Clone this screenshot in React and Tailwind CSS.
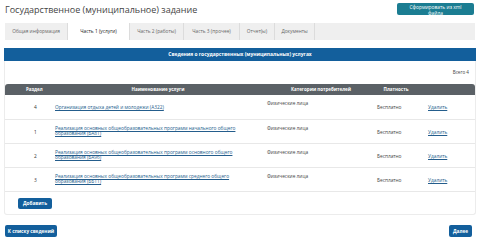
const rows = [
  { section: '4', name: ['Организация отдыха детей и молодежи (А322)'] },
  { section: '1', name: ['Реализация основных общеобразовательных программ начального общего', 'образования (БА81)'] },
  { section: '2', name: ['Реализация основных общеобразовательных программ основного общего', 'образования (БА96)'] },
  { section: '3', name: ['Реализация основных общеобразовательных программ среднего общего', 'образования (ББ11)'] },
]

const tabs = [
  { label: 'Общая информация', w: 'w-[63px]' },
  { label: 'Часть 1 (услуги)', w: 'w-[62px]', active: true },
  { label: 'Часть 2 (работы)', w: 'w-[54px]' },
  { label: 'Часть 3 (прочее)', w: 'w-[56px]' },
  { label: 'Отчет(ы)', w: 'w-[35px]' },
  { label: 'Документы', w: 'w-[40px]' },
]

export default function App() {
  return (
    <div className="w-[480px] h-[244px] overflow-hidden bg-white font-['Open_Sans',sans-serif] text-[#333] leading-none">
      <div className="flex items-start justify-between pl-[5px] pr-[6px] pt-[3px] h-[21px]">
        <h1 className="text-[9px] leading-[14px] text-[#444]">Государственное (муниципальное) задание</h1>
        <button className="w-[77px] h-[12px] overflow-hidden rounded-[2px] bg-[#1b7d92] text-white text-[4.9px] leading-[6px] pt-[1px] text-center">
          Сформировать из xml<br />файла
        </button>
      </div>

      <div className="mx-[5px] mt-[2px] h-[17px] bg-[#efefef] flex">
        {tabs.map(t => (
          <div
            key={t.label}
            className={`${t.w} h-full flex items-center justify-center text-[4.8px] border-r border-[#dcdcdc] ${t.active ? 'bg-white text-[#222]' : 'text-[#666]'}`}
          >
            {t.label}
          </div>
        ))}
      </div>

      <div className="mx-[4px] mt-[8px] h-[13px] bg-[#135f9c] flex items-center justify-center text-white text-[4.9px] font-bold">
        Сведения о государственных (муниципальных) услугах
      </div>

      <div className="mx-[4px] border border-t-0 border-[#ececec] rounded-b-[3px] pb-[5px]">
        <div className="h-[23px] flex items-center justify-end pr-[6px] text-[4.6px] text-[#444]">Всего 4</div>
        <div className="h-[11px] bg-[#5b6166] rounded-t-[3px] flex items-center text-white text-[4.5px] font-bold">
          <div className="w-[48px] pl-[21px]">Раздел</div>
          <div className="w-[210px] text-center">Наименование услуги</div>
          <div className="w-[116px] text-center">Категории потребителей</div>
          <div className="w-[34px] text-center">Платность</div>
        </div>
        {rows.map((r, i) => (
          <div key={r.section} className={`flex border-b border-[#e8e8e8] text-[4.8px] leading-[5px] ${i === 0 ? 'h-[25px]' : 'h-[24px]'}`}>
            <div className="w-[50px] pl-[29px] pt-[10px]">{r.section}</div>
            <div className={`w-[212px] text-[#245d8c] ${r.name.length > 1 ? 'pt-[6px]' : 'pt-[10px]'}`}>
              {r.name.map(l => (
                <div key={l} className="underline whitespace-nowrap">{l}</div>
              ))}
            </div>
            <div className="w-[110px] pt-[6px] text-[#444]">Физические лица</div>
            <div className="w-[51px] pt-[10px] text-[#444]">Бесплатно</div>
            <div className="pt-[10px] text-[#245d8c] underline">Удалить</div>
          </div>
        ))}
        <div className="flex pl-[13px] pt-[6px]">
          <button className="w-[34px] h-[11px] rounded-[2px] bg-[#135f9c] text-white text-[4.7px] font-bold">Добавить</button>
        </div>
      </div>

      <div className="flex justify-between pl-[5px] pr-[8px] mt-[10px]">
        <button className="w-[52px] h-[12px] rounded-[2px] bg-[#135f9c] text-white text-[4.7px] font-bold">К списку сведений</button>
        <button className="w-[23px] h-[12px] rounded-[2px] bg-[#135f9c] text-white text-[4.7px] font-bold">Далее</button>
      </div>
    </div>
  )
}
